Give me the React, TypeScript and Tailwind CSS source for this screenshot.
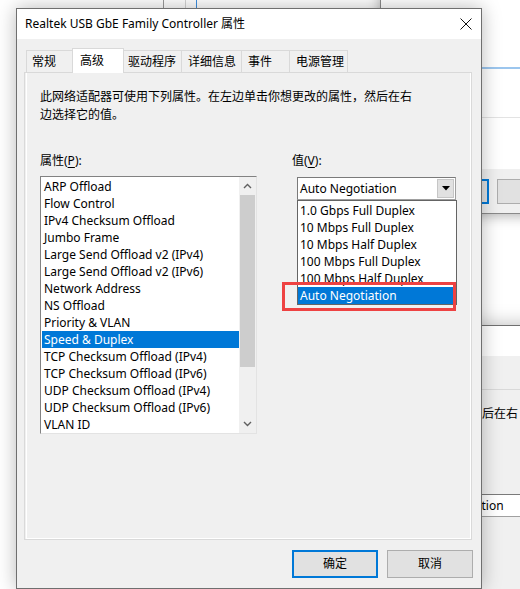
import React from "react";

const items = [
  "ARP Offload",
  "Flow Control",
  "IPv4 Checksum Offload",
  "Jumbo Frame",
  "Large Send Offload v2 (IPv4)",
  "Large Send Offload v2 (IPv6)",
  "Network Address",
  "NS Offload",
  "Priority & VLAN",
  "Speed & Duplex",
  "TCP Checksum Offload (IPv4)",
  "TCP Checksum Offload (IPv6)",
  "UDP Checksum Offload (IPv4)",
  "UDP Checksum Offload (IPv6)",
  "VLAN ID",
];

const options = [
  "1.0 Gbps Full Duplex",
  "10 Mbps Full Duplex",
  "10 Mbps Half Duplex",
  "100 Mbps Full Duplex",
  "100 Mbps Half Duplex",
  "Auto Negotiation",
];

const tabs = [
  { label: "常规", cls: "w-[47px] pl-[5px]", sel: false },
  { label: "高级", cls: "w-[52px] pl-[7px]", sel: true },
  { label: "驱动程序", cls: "w-[59px] pl-[4px]", sel: false },
  { label: "详细信息", cls: "w-[61px] pl-[6px]", sel: false },
  { label: "事件", cls: "w-[49px] pl-[6px]", sel: false },
  { label: "电源管理", cls: "w-[59px] pl-[6px]", sel: false },
];

function Chevron({ up }: { up: boolean }) {
  return (
    <svg width="9" height="6" viewBox="0 0 9 6">
      <path
        d={up ? "M1 5 L4.5 1.5 L8 5" : "M1 1 L4.5 4.5 L8 1"}
        fill="none"
        stroke="#606060"
        strokeWidth="1.4"
      />
    </svg>
  );
}

function Dialog({ main }: { main: boolean }) {
  return (
    <div className="flex flex-col w-[466px] h-[581px] border border-[#6f6f6f] bg-[#f0f0f0] shadow-[0_0_18px_rgba(0,0,0,0.28)] text-[12px] text-black">
      {/* title bar */}
      <div className="h-[30px] bg-white flex items-center justify-between pl-[8px] pr-[9px] shrink-0">
        <span className="leading-none">{main ? "Realtek USB GbE Family Controller 属性" : ""}</span>
        <svg width="12" height="12" viewBox="0 0 12 12">
          <path d="M0.5 0.5 L11.5 11.5 M11.5 0.5 L0.5 11.5" stroke="#111" strokeWidth="1" fill="none" />
        </svg>
      </div>

      <div className="flex flex-col pl-[7px] pr-[9px] pt-[9px]">
        {/* tabs */}
        <div className="flex items-end h-[24px] ml-[2px]">
          {tabs.map((t, i) => (
            <div
              key={t.label}
              className={
                "flex items-center border border-b-0 border-[#d9d9d9] shrink-0 " +
                t.cls +
                (i === 0 ? "" : " -ml-px") +
                (t.sel ? " h-[25px] -mb-px bg-white relative z-10 pb-[1px]" : " h-[22px] bg-[#f0f0f0]")
              }
            >
              {main ? t.label : ""}
            </div>
          ))}
        </div>

        {/* panel */}
        <div className="h-[468px] border border-[#d9d9d9]">
          <div className="h-full ml-px border-l border-b border-r border-white pl-[13px] pt-[15px]">
            {main ? (
              <p className="leading-[18px]">
                此网络适配器可使用下列属性。在左边单击你想更改的属性，然后在右
                <br />
                边选择它的值。
              </p>
            ) : (
              <p className="leading-[18px] h-[36px] w-[371px] text-right">后在右</p>
            )}

            <div className="flex gap-[35px] mt-[28px]">
              {/* left column */}
              <div className="flex flex-col w-[217px]">
                <div className="leading-[18px] h-[18px]">
                  {main ? (
                    <>
                      属性(<span className="underline underline-offset-2">P</span>):
                    </>
                  ) : null}
                </div>
                <div className="mt-[6px] h-[258px] flex border border-t-[#828282] border-l-[#828282] border-r-[#e3e3e3] border-b-[#e3e3e3] bg-white">
                  <div className="flex-1 pl-px pt-px">
                    {main &&
                      items.map((it) => (
                        <div
                          key={it}
                          className={
                            "h-[17px] leading-[17px] pl-[2px] whitespace-nowrap " +
                            (it === "Speed & Duplex" ? "bg-[#0078d7] text-white" : "")
                          }
                        >
                          {it}
                        </div>
                      ))}
                  </div>
                  <div className="w-[17px] bg-[#f0f0f0] flex flex-col">
                    <div className="h-[18px] flex items-center justify-center">
                      <Chevron up />
                    </div>
                    <div className="h-[172px] mx-px bg-[#cdcdcd]" />
                    <div className="flex-1" />
                    <div className="h-[18px] flex items-center justify-center">
                      <Chevron up={false} />
                    </div>
                  </div>
                </div>
              </div>

              {/* right column */}
              <div className="flex flex-col">
                <div className="leading-[18px] h-[18px]">
                  {main ? (
                    <>
                      值(<span className="underline underline-offset-2">V</span>):
                    </>
                  ) : null}
                </div>
                <div className="relative ml-[5px] mt-[7px] w-[159px] h-[23px] bg-white border border-t-[#7a7a7a] border-l-[#7a7a7a] border-r-[#a0a0a0] border-b-[#a0a0a0] flex items-center">
                  <span className="pl-[2px] flex-1 leading-none whitespace-nowrap">
                    {main ? "Auto Negotiation" : "Auto Negoti\u200Bation".replace("\u200B", "")}
                  </span>
                  <div className="w-[17px] h-[19px] mr-px bg-[#e1e1e1] border border-[#c6c6c6] flex items-center justify-center">
                    <svg width="8" height="5" viewBox="0 0 8 5">
                      <path d="M0 0 L8 0 L4 4.5 Z" fill="#000" />
                    </svg>
                  </div>

                  {main && (
                    <>
                      <div className="absolute left-[-1px] top-[22px] w-[160px] h-[105px] bg-white border border-[#646464] pt-px pr-[2px] z-20">
                        {options.map((o) => (
                          <div
                            key={o}
                            className={
                              "h-[17px] leading-[17px] pl-[2px] whitespace-nowrap " +
                              (o === "Auto Negotiation" ? "bg-[#0078d7] text-white" : "")
                            }
                          >
                            {o}
                          </div>
                        ))}
                      </div>
                      <div className="absolute left-[-16px] top-[104px] w-[174px] h-[29px] border-[3px] border-[#ee4242] z-30" />
                    </>
                  )}
                </div>
              </div>
            </div>
          </div>
        </div>
      </div>

      {/* buttons */}
      <div className="flex justify-end gap-[9px] pr-[8px] mt-[10px]">
        <div className="w-[86px] h-[28px] bg-[#e1e1e1] border-2 border-[#0078d7] flex items-center justify-center">
          {main ? "确定" : ""}
        </div>
        <div className="w-[86px] h-[28px] bg-[#e1e1e1] border border-[#adadad] flex items-center justify-center">
          {main ? "取消" : ""}
        </div>
      </div>
    </div>
  );
}

export default function App() {
  return (
    <div className="relative w-[520px] h-[589px] overflow-hidden bg-white font-['Noto_Sans','Noto_Sans_CJK_SC',sans-serif]">
      {/* background window edges above the dialog */}
      <div className="absolute left-[163px] top-0 w-px h-[10px] bg-[#9a9a9a]" />
      <div className="absolute left-[185px] top-0 w-px h-[10px] bg-[#d4d4d4]" />
      <div className="absolute left-[196px] top-0 w-px h-[10px] bg-[#3d8fe0]" />

      {/* upper background window */}
      <div className="absolute left-[380px] top-[-20px] w-[300px] h-[234px] bg-white border border-[#8a8a8a] shadow-[0_2px_12px_rgba(0,0,0,0.3)] flex flex-col">
        <div className="h-[86px]" />
        <div className="h-[2px] bg-[#9cc6ee]" />
        <div className="h-[48px]" />
        <div className="h-px bg-[#e3e3e3]" />
        <div className="h-[51px]" />
        <div className="h-[44px] bg-[#f0f0f0] flex items-start pt-[10px] pl-[22px] gap-[8px]">
          <div className="w-[86px] h-[25px] bg-[#e1e1e1] border-2 border-[#0078d7]" />
          <div className="w-[86px] h-[25px] bg-[#e1e1e1] border border-[#adadad]" />
        </div>
      </div>

      {/* lower background dialog */}
      <div className="absolute left-[123px] top-[325px]">
        <Dialog main={false} />
      </div>

      {/* main dialog */}
      <div className="absolute left-[16px] top-[8px] z-10">
        <Dialog main />
      </div>
    </div>
  );
}
